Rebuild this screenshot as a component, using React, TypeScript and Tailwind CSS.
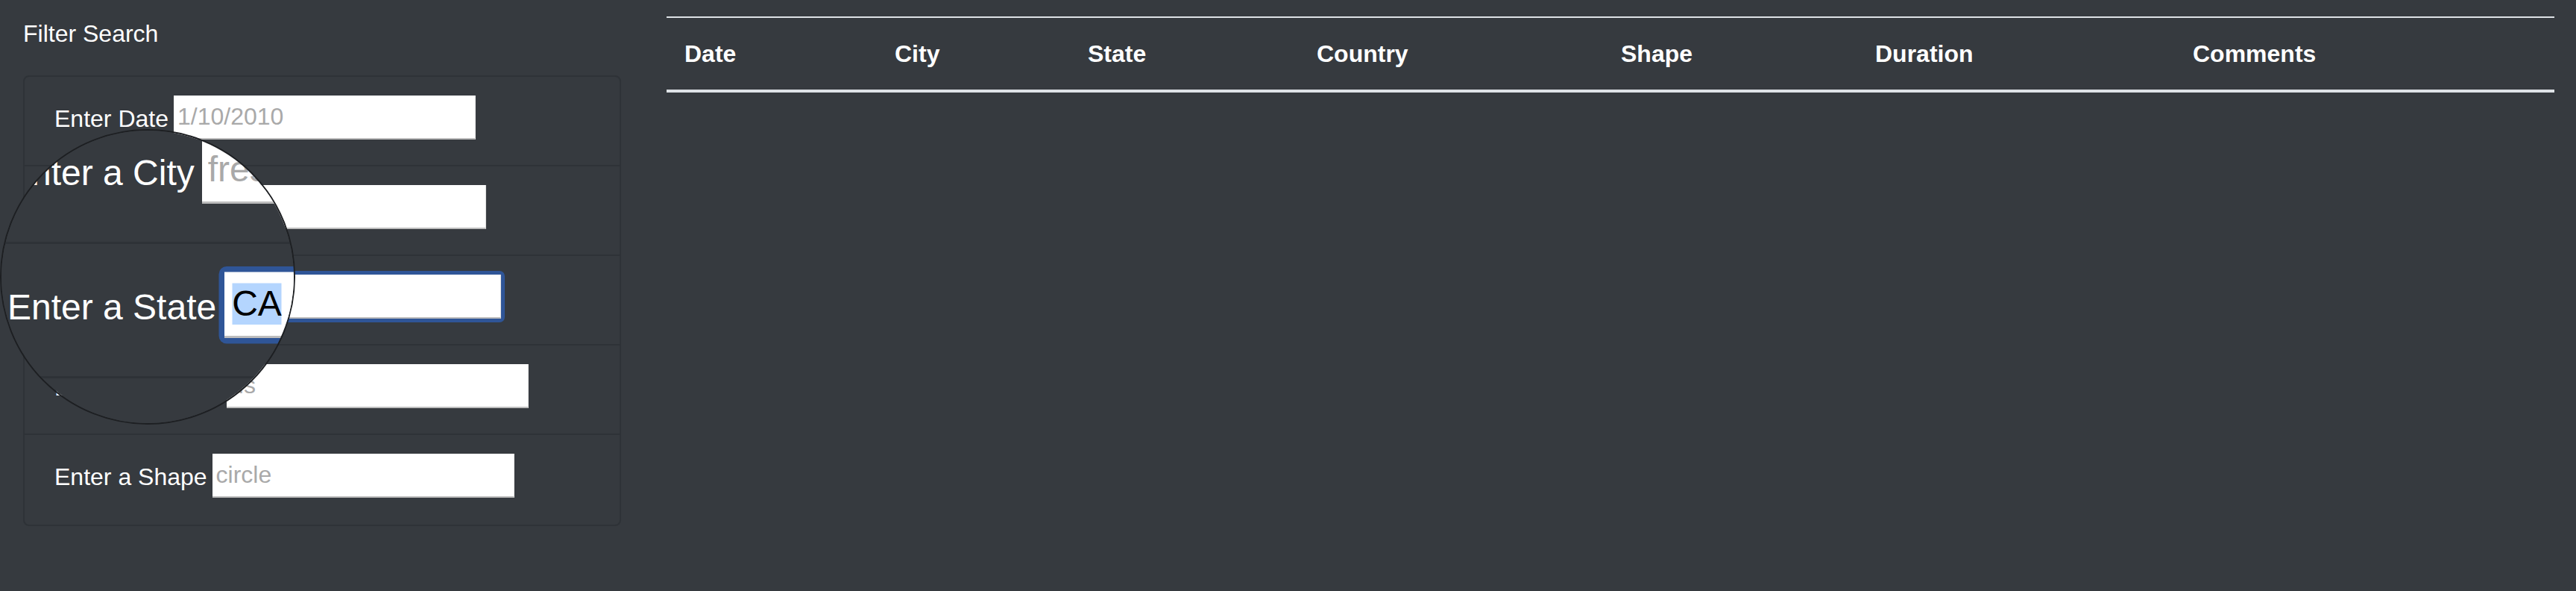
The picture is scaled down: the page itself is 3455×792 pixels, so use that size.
import React from "react";

type Filter = { label: string; placeholder?: string; value?: string };

const filters: Filter[] = [
  { label: "Enter Date", placeholder: "1/10/2010" },
  { label: "Enter a City", placeholder: "fresno" },
  { label: "Enter a State", value: "CA" },
  { label: "Enter a Country", placeholder: "us" },
  { label: "Enter a Shape", placeholder: "circle" },
];

const columns = [
  { name: "Date", width: "w-[282px]" },
  { name: "City", width: "w-[259px]" },
  { name: "State", width: "w-[307px]" },
  { name: "Country", width: "w-[408px]" },
  { name: "Shape", width: "w-[341px]" },
  { name: "Duration", width: "w-[426px]" },
  { name: "Comments", width: "w-[509px]" },
];

function FilterPanel() {
  return (
    <div className="w-[802px] flex-none pt-[21px]">
      <h5 className="text-[32px] leading-[48px] text-white">Filter Search</h5>
      <ul className="mt-[32px] divide-y-2 divide-[#2e3237] rounded-[8px] border-2 border-[#2e3237]">
        {filters.map((f) => (
          <li key={f.label} className="flex h-[120px] items-start pl-[40px] pt-[25px]">
            <label className="mr-[7px] text-[32px] leading-[63px] text-white">{f.label}</label>
            {f.value ? (
              // focused input with its text selected
              <div className="-mt-[5px] -ml-[5px] rounded-[7px] bg-[#2f5597] p-[5px]">
                <div className="flex h-[59px] w-[405px] items-center border-r border-b-2 border-r-[#dcdcdc] border-b-[#bdbdbd] bg-white px-[7px] text-[32px] text-black">
                  <span className="bg-[#b4d5fe] leading-[37px]">{f.value}</span>
                </div>
              </div>
            ) : (
              <input
                type="text"
                placeholder={f.placeholder}
                className="h-[59px] w-[405px] border-0 border-r border-b-2 border-r-[#dcdcdc] border-b-[#bdbdbd] bg-white px-[5px] text-[32px] text-black outline-none placeholder:text-[#a9a9a9]"
              />
            )}
          </li>
        ))}
      </ul>
    </div>
  );
}

export default function App() {
  return (
    <div className="relative flex min-h-screen w-full overflow-hidden bg-[#363a3f] pl-[31px] [font-family:'Liberation_Sans',Arial,sans-serif]">
      <FilterPanel />

      {/* UFO table */}
      <table className="mt-[22px] ml-[61px] h-fit w-[2532px] flex-none border-separate border-spacing-0 self-start">
        <thead>
          <tr>
            {columns.map((c) => (
              <th
                key={c.name}
                className={`${c.width} border-t-2 border-b-4 border-[#dee2e6] p-[24px] text-left align-bottom text-[32px] leading-[48px] font-bold text-white`}
              >
                {c.name}
              </th>
            ))}
          </tr>
        </thead>
        <tbody></tbody>
      </table>

      {/* Magnifier lens */}
      <div className="absolute top-[173px] left-0 h-[396px] w-[396px] overflow-hidden rounded-full border-2 border-[#1d1f22]">
        <div className="absolute top-[-175px] left-[-2px] h-[792px] w-[1000px] origin-[199px_375px] scale-150 bg-[#363a3f] pl-[31px]">
          <FilterPanel />
        </div>
      </div>
    </div>
  );
}
